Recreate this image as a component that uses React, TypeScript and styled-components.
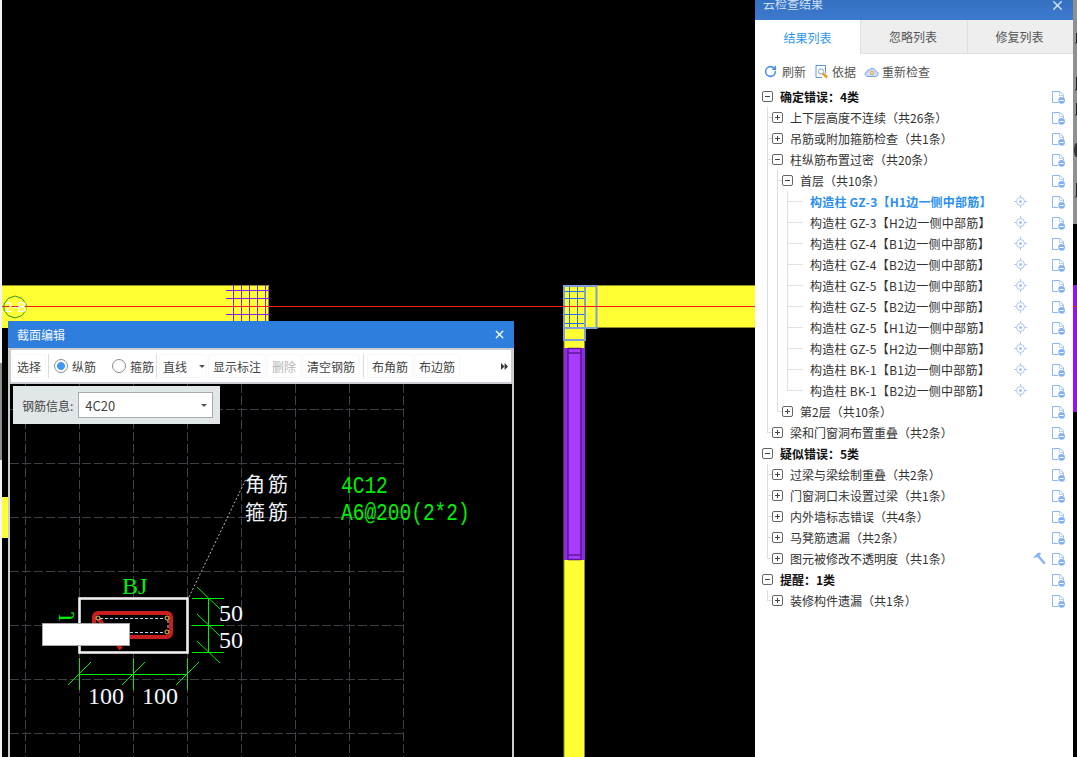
import React from "react";
import styled, { createGlobalStyle } from "styled-components";
import { RotateCw, X } from "lucide-react";

const Global = createGlobalStyle`
  html, body { margin: 0; padding: 0; background: #000; overflow: hidden; }
  body { font-family: "Noto Sans CJK SC", "Liberation Sans", sans-serif; font-size: 12px; }
`;

const Desk = styled.div`
  display: flex;
  width: 1077px;
  height: 757px;
  overflow: hidden;
  background: #000;
`;
const CadArea = styled.main`
  position: relative;
  flex: 0 0 755px;
  height: 757px;
  background: #000;
  overflow: hidden;
`;
const SceneSvg = styled.svg`
  display: block;
  width: 755px;
  height: 757px;
`;
const Dialog = styled.section`
  position: absolute;
  left: 8px;
  top: 321px;
  width: 506px;
  height: 436px;
  display: flex;
  flex-direction: column;
  background: #c9cdd1;
`;
const DialogTitle = styled.header`
  flex: 0 0 27px;
  display: flex;
  align-items: center;
  justify-content: space-between;
  padding: 0 9px;
  background: #2e7fdd;
  color: #f2f7fd;
  font-size: 12px;
`;
const DialogClose = styled.span`
  display: flex;
  color: #fff;
  margin-right: -1px;
`;
const ToolBar = styled.div`
  flex: 0 0 32px;
  margin: 2px 3px 2px 3px;
  display: flex;
  align-items: center;
  background: #fff;
  color: #444;
`;
const ToolButton = styled.button<{ $disabled?: boolean; $m?: number }>`
  height: 24px;
  padding: 0 5px;
  margin: 0 0 0 ${(p) => p.$m ?? 1}px;
  border: 0;
  border-radius: 3px;
  background: #fff;
  box-shadow: inset 0 0 0 1px #f7f7f7;
  font: inherit;
  font-size: 12px;
  color: ${(p) => (p.$disabled ? "#b5b5b5" : "#444")};
  white-space: nowrap;
`;
const DropButton = styled(ToolButton)`
  display: flex;
  align-items: center;
  gap: 12px;
  margin-left: 2px;
  padding: 0 2px 0 4px;
  width: 48px;
`;
const ToolSep = styled.span<{ $m: number }>`
  width: 1px;
  height: 24px;
  margin-left: ${(p) => p.$m}px;
  background: #dcdcdc;
`;
const RadioItem = styled.label<{ $m: number }>`
  display: flex;
  align-items: center;
  gap: 4px;
  margin-left: ${(p) => p.$m}px;
  font-size: 12px;
  color: #444;
`;
const RadioDot = styled.span<{ $on?: boolean }>`
  box-sizing: border-box;
  width: 14px;
  height: 14px;
  border-radius: 50%;
  border: 1px solid #8c8c8c;
  background: ${(p) =>
    p.$on ? "radial-gradient(circle, #3f97f6 0 3.6px, #fff 4.2px)" : "#fff"};
`;
const MoreArrows = styled.span`
  display: flex;
  margin-left: auto;
  margin-right: 3px;
`;
const CadCanvas = styled.div`
  position: relative;
  flex: 1;
  margin: 0 2px;
  background: #000;
  overflow: hidden;
`;
const CadSvg = styled.svg`
  display: block;
  width: 502px;
  height: 373px;
`;
const InfoBar = styled.div`
  position: absolute;
  left: 3px;
  top: 2px;
  width: 207px;
  height: 38px;
  box-sizing: border-box;
  padding-left: 9px;
  display: flex;
  align-items: center;
  gap: 5px;
  background: #e1e7e9;
  color: #444;
  font-size: 12px;
`;
const SelectBox = styled.div`
  box-sizing: border-box;
  width: 135px;
  height: 26px;
  padding: 0 5px 0 6px;
  display: flex;
  align-items: center;
  justify-content: space-between;
  background: #fff;
  border: 1px solid #aaa;
  font-size: 13px;
  color: #444;
`;
const MaskPatch = styled.div`
  position: absolute;
  left: 32px;
  top: 239px;
  width: 88px;
  height: 23px;
  box-sizing: border-box;
  background: #fff;
  border: 1px solid #a8a8a8;
`;

const Panel = styled.aside`
  flex: 0 0 318px;
  height: 757px;
  display: flex;
  flex-direction: column;
  background: #fff;
`;
const PanelHead = styled.header`
  flex: 0 0 20px;
  display: flex;
  justify-content: space-between;
  overflow: hidden;
  padding: 0 8px 0 8px;
  background: linear-gradient(#3571c2, #3c7ace);
  color: #cfe0f5;
  font-size: 12px;
`;
const PanelTitle = styled.span`
  line-height: 16px;
  margin-top: -4px;
`;
const PanelClose = styled.span`
  display: flex;
  margin: -2px 0 0 0;
  color: #cfe0f5;
`;
const Tabs = styled.nav`
  flex: 0 0 34px;
  display: flex;
`;
const Tab = styled.div<{ $active?: boolean; $w: number }>`
  box-sizing: border-box;
  width: ${(p) => p.$w}px;
  display: flex;
  align-items: center;
  justify-content: center;
  font-size: 12px;
  padding-right: ${(p) => (p.$active ? 0 : 2)}px;
  background: ${(p) => (p.$active ? "#fff" : "#eeeeee")};
  color: ${(p) => (p.$active ? "#2e96f0" : "#555")};
  border-left: ${(p) => (p.$active ? "0" : "1px solid #e0e0e0")};
  border-bottom: ${(p) => (p.$active ? "0" : "1px solid #e0e0e0")};
`;
const ActionBar = styled.div`
  flex: 0 0 32px;
  box-sizing: border-box;
  padding: 3px 0 0 9px;
  display: flex;
  align-items: center;
  color: #555;
`;
const Action = styled.span<{ $gap: number; $m: number }>`
  display: flex;
  align-items: center;
  gap: ${(p) => p.$gap}px;
  margin-right: ${(p) => p.$m}px;
  font-size: 12px;
  color: #555;
`;
const Tree = styled.div`
  display: flex;
  flex-direction: column;
`;
const Row = styled.div`
  height: 21px;
  display: flex;
  align-items: center;
  padding: 0 8px 0 7px;
`;
const lineBg: Record<string, string> = {
  none: "none",
  through: "linear-gradient(#dedede,#dedede) 5px 0 / 1px 100% no-repeat",
  branch:
    "linear-gradient(#dedede,#dedede) 5px 0 / 1px 100% no-repeat, linear-gradient(#dedede,#dedede) 5px 50% / 5px 1px no-repeat",
  end: "linear-gradient(#dedede,#dedede) 5px 0 / 1px 50% no-repeat, linear-gradient(#dedede,#dedede) 5px 50% / 5px 1px no-repeat",
};
const Guide = styled.span<{ $line: string }>`
  flex: 0 0 10px;
  height: 21px;
  background: ${(p) => lineBg[p.$line]};
`;
const Toggle = styled.span`
  box-sizing: border-box;
  position: relative;
  flex: 0 0 11px;
  height: 11px;
  margin-right: 7px;
  border: 1px solid #666;
  border-radius: 2px;
  background: #fff;
`;
const ToggleMark = styled.span<{ $plus?: boolean }>`
  position: absolute;
  left: 2px;
  top: 4px;
  width: 5px;
  height: 1px;
  background: #444;
  &::after {
    content: "";
    display: ${(p) => (p.$plus ? "block" : "none")};
    position: absolute;
    left: 2px;
    top: -2px;
    width: 1px;
    height: 5px;
    background: #444;
  }
`;
const LeafLine = styled.span`
  flex: 0 0 11px;
  height: 1px;
  margin-right: 7px;
  background: #e2e2e2;
`;
const Label = styled.span<{ $bold?: boolean; $active?: boolean; $leaf?: boolean }>`
  font-size: 12px;
  white-space: pre;
  letter-spacing: ${(p) => (p.$leaf ? (p.$active ? "0.2px" : "0.27px") : "0")};
  font-weight: ${(p) => (p.$bold || p.$active ? 700 : 400)};
  color: ${(p) => (p.$active ? "#2a8ff0" : p.$bold ? "#111" : "#333")};
`;
const RowIcons = styled.span`
  margin-left: auto;
  display: flex;
  align-items: center;
`;
const RowIconSlot = styled.span<{ $gap: number }>`
  display: flex;
  margin-right: ${(p) => p.$gap}px;
`;
const EdgeStrip = styled.div`
  flex: 0 0 4px;
  height: 757px;
  display: flex;
  flex-direction: column;
`;
const EdgeGrey = styled.svg`
  display: block;
  width: 4px;
  height: 224px;
  background: #8f9090;
`;
const EdgeBlack = styled.div<{ $h: number }>`
  height: ${(p) => p.$h}px;
  background: #000;
`;
const EdgePurple = styled.div`
  height: 127px;
  background: linear-gradient(#ff1a1a, #ff1a1a) 0 21px / 100% 1px no-repeat, #9b10f0;
`;

const DocIcon = () => (
  <svg width="13" height="14" viewBox="0 0 13 14" fill="none">
    <path d="M.5 1.5H8L11.5 5V7M.5 1.5V12.5H6" stroke="#8ab6f4" strokeWidth="1" />
    <path d="M7.5 1.5V5.5H11.5" stroke="#b9d3f8" strokeWidth="1" />
    <circle cx="9.6" cy="10.4" r="3.3" fill="#84b1f2" />
    <rect x="7.6" y="10" width="4" height="1" fill="#fff" />
  </svg>
);
const LocateIcon = () => (
  <svg width="13" height="13" viewBox="0 0 13 13" fill="none" stroke="#a9c6f0">
    <circle cx="6.5" cy="6.5" r="4" />
    <circle cx="6.5" cy="6.5" r="1.6" fill="#a9c6f0" stroke="none" />
    <path d="M6.5 0V2.5M6.5 10.5V13M0 6.5H2.5M10.5 6.5H13" />
  </svg>
);
const HammerIcon = () => (
  <svg width="13" height="13" viewBox="0 0 13 13" fill="none">
    <path d="M0 6L4.5 1L7 .5L8 2L5.5 5Z" fill="#86b4f3" />
    <path d="M5 3.8L11.8 11.8" stroke="#86b4f3" strokeWidth="2.4" />
  </svg>
);
const BasisIcon = () => (
  <svg width="13" height="14" viewBox="0 0 13 14" fill="none">
    <path d="M1 .5H10.5V8M1 .5V12.5H7" stroke="#5f93d8" />
    <circle cx="6" cy="6.5" r="2.6" stroke="#7f9fc8" />
    <path d="M8 8.5L12 12.5" stroke="#f09a24" strokeWidth="2.6" />
  </svg>
);
const CloudIcon = () => (
  <svg width="15" height="12" viewBox="0 0 15 12" fill="none">
    <path
      d="M4 10.5H11.5C15 10.5 15 6 12 5.7C11.5 2.5 7 1 5.5 4C3.5 3.5 2.5 5 3 6C.2 6.5.5 10.5 4 10.5Z"
      fill="#cfe0f6"
      stroke="#6ea2e2"
    />
    <circle cx="8" cy="6.8" r="1.7" stroke="#ef9f45" />
  </svg>
);
const Caret = () => (
  <svg width="6" height="3" viewBox="0 0 6 3">
    <path d="M0 0H6L3 3Z" fill="#555" />
  </svg>
);
const DoubleArrow = () => (
  <svg width="7" height="7" viewBox="0 0 7 7">
    <path d="M0 0L3.4 3.5L0 7ZM3.6 0L7 3.5L3.6 7Z" fill="#333" />
  </svg>
);

type Node = {
  text: string;
  open?: boolean;
  bold?: boolean;
  active?: boolean;
  locate?: boolean;
  hammer?: boolean;
  kids?: Node[];
};

const leaf = (t: string, active = false): Node => ({ text: t, locate: true, active });
const closed = (t: string, hammer = false): Node => ({ text: t, kids: [], hammer });

const DATA: Node[] = [
  {
    text: "确定错误：4类",
    bold: true,
    open: true,
    kids: [
      closed("上下层高度不连续（共26条）"),
      closed("吊筋或附加箍筋检查（共1条）"),
      {
        text: "柱纵筋布置过密（共20条）",
        open: true,
        kids: [
          {
            text: "首层（共10条）",
            open: true,
            kids: [
              leaf("构造柱 GZ-3【H1边一侧中部筋】", true),
              leaf("构造柱 GZ-3【H2边一侧中部筋】"),
              leaf("构造柱 GZ-4【B1边一侧中部筋】"),
              leaf("构造柱 GZ-4【B2边一侧中部筋】"),
              leaf("构造柱 GZ-5【B1边一侧中部筋】"),
              leaf("构造柱 GZ-5【B2边一侧中部筋】"),
              leaf("构造柱 GZ-5【H1边一侧中部筋】"),
              leaf("构造柱 GZ-5【H2边一侧中部筋】"),
              leaf("构造柱 BK-1【B1边一侧中部筋】"),
              leaf("构造柱 BK-1【B2边一侧中部筋】"),
            ],
          },
          closed("第2层（共10条）"),
        ],
      },
      closed("梁和门窗洞布置重叠（共2条）"),
    ],
  },
  {
    text: "疑似错误：5类",
    bold: true,
    open: true,
    kids: [
      closed("过梁与梁绘制重叠（共2条）"),
      closed("门窗洞口未设置过梁（共1条）"),
      closed("内外墙标志错误（共4条）"),
      closed("马凳筋遗漏（共2条）"),
      closed("图元被修改不透明度（共1条）", true),
    ],
  },
  {
    text: "提醒：1类",
    bold: true,
    open: true,
    kids: [closed("装修构件遗漏（共1条）")],
  },
];

function renderNode(n: Node, guides: string[], childPrefix: string[], key: string): React.ReactNode[] {
  const rows: React.ReactNode[] = [
    <Row key={key}>
      {guides.map((g, i) => (
        <Guide key={i} $line={g} />
      ))}
      {n.kids ? (
        <Toggle>
          <ToggleMark $plus={!n.open} />
        </Toggle>
      ) : (
        <LeafLine />
      )}
      <Label $bold={n.bold} $active={n.active} $leaf={!n.kids}>
        {n.text}
      </Label>
      <RowIcons>
        {n.locate && (
          <RowIconSlot $gap={25}>
            <LocateIcon />
          </RowIconSlot>
        )}
        {n.hammer && (
          <RowIconSlot $gap={6}>
            <HammerIcon />
          </RowIconSlot>
        )}
        <DocIcon />
      </RowIcons>
    </Row>,
  ];
  if (n.open && n.kids) {
    n.kids.forEach((k, i) => {
      const last = i === n.kids!.length - 1;
      rows.push(
        ...renderNode(
          k,
          [...childPrefix, last ? "end" : "branch"],
          [...childPrefix, last ? "none" : "through"],
          `${key}-${i}`
        )
      );
    });
  }
  return rows;
}

const Y = "#ffff33";
const OL = "#8c8c28";
const BL = "#7f9fd6";

const Scene = () => (
  <SceneSvg viewBox="0 0 755 757">
    <rect x="0" y="0" width="2" height="757" fill="#f4f4f4" />
    <rect x="0" y="363" width="2" height="97" fill="#8d8d8d" />
    <rect x="2" y="497" width="6" height="41" fill={Y} />
    <rect x="2" y="285" width="267" height="43" fill={Y} />
    <path d="M2 285.5H268.5V328" stroke={OL} fill="none" />
    {[233, 241, 249, 257, 265].map((x) => (
      <path key={x} d={`M${x + 0.5} 285V322`} stroke="#8a1cf0" />
    ))}
    {[290, 298, 314].map((y) => (
      <path key={y} d={`M226 ${y + 0.5}H269`} stroke="#8a1cf0" />
    ))}
    <rect x="597" y="285" width="158" height="43" fill={Y} />
    <path d="M597 285.5H755M597 327.5H755" stroke={OL} />
    <rect x="564" y="285" width="21" height="472" fill={Y} />
    <path d="M564 340V757M584.5 340V757" stroke={OL} />
    <rect x="585" y="286" width="12" height="42" fill={Y} />
    {[569, 577].map((x) => (
      <path key={x} d={`M${x + 0.5} 286V327`} stroke="#1f6cf0" />
    ))}
    {[291, 298, 314, 323].map((y) => (
      <path key={y} d={`M565 ${y + 0.5}H584`} stroke="#1f6cf0" />
    ))}
    <path d="M564 286H596.5V328H585" fill="none" stroke={BL} strokeWidth="2" />
    <path d="M564 285V340H585V286M564 328H585" fill="none" stroke={BL} strokeWidth="2" />
    <rect x="564" y="348" width="21" height="212" fill="#8d28e4" />
    <rect x="568" y="348" width="13" height="212" fill="#a93cff" />
    <path d="M568 348V560M581 348V560" stroke="#5a1a9a" strokeWidth="1.6" />
    <path d="M568 348.5H581M568 353H581M568 555H581M568 559.5H581" stroke="#5a1a9a" strokeWidth="1.4" />
    <path d="M2 306.5H755" stroke="#ff1a1a" strokeWidth="1" />
    <polygon
      points="15,296 22,298.5 26,304 26,310 22,315.5 15,318 8,315.5 4,310 4,304 8,298.5"
      fill="none"
      stroke="#2a9a1a"
    />
    <text x="5" y="312" fontFamily="Liberation Sans" fontSize="14" fill="#fff">
      2-B
    </text>
  </SceneSvg>
);

const V = [25, 79, 133, 187, 241, 295, 349, 403];
const H = [409, 463, 517, 571, 625, 679, 733];
const G = "#00f000";

const Drawing = () => (
  <CadSvg viewBox="10 384 502 373">
    {V.map((x) => (
      <path key={x} d={`M${x + 0.5} 384V757`} stroke="#3c4048" strokeDasharray="9 3" />
    ))}
    {H.map((y) => (
      <path key={y} d={`M10 ${y + 0.5}H404`} stroke="#3c4048" strokeDasharray="9 3" />
    ))}
    <rect x="79.5" y="598.5" width="108" height="54" fill="#000" />
    <path d="M98 618L121 649" stroke="#c81e1e" strokeWidth="4" />
    <rect x="94" y="613" width="77" height="24" rx="4" fill="none" stroke="#c81e1e" strokeWidth="4" />
    <path d="M100 618.5H165M100 632.5H165M168 620V631" stroke="#bcd4f2" strokeDasharray="3 2" />
    {[
      [98, 618],
      [167, 618],
      [98, 632],
      [167, 632],
    ].map(([x, y]) => (
      <circle key={`${x}${y}`} cx={x} cy={y} r="2" fill="#000" stroke="#f2d23a" />
    ))}
    <rect x="79.5" y="598.5" width="108" height="54" fill="none" stroke="#efefef" strokeWidth="2.6" />
    <path d="M189 597L246 479" stroke="#b9b9b9" strokeDasharray="2 2" />
    <g stroke={G} strokeWidth="1">
      <line x1="192" y1="598.5" x2="224" y2="598.5" />
      <line x1="192" y1="625.5" x2="224" y2="625.5" />
      <line x1="192" y1="652.5" x2="224" y2="652.5" />
      <line x1="208.5" y1="598" x2="208.5" y2="653" />
      <line x1="197" y1="587" x2="220" y2="609" />
      <line x1="197" y1="614" x2="220" y2="636" />
      <line x1="197" y1="641" x2="220" y2="663" />
      <line x1="79.5" y1="658" x2="79.5" y2="690" />
      <line x1="133.5" y1="658" x2="133.5" y2="690" />
      <line x1="187.5" y1="658" x2="187.5" y2="690" />
      <line x1="79" y1="674.5" x2="188" y2="674.5" />
      <line x1="68" y1="685" x2="91" y2="662" />
      <line x1="122" y1="685" x2="145" y2="662" />
      <line x1="176" y1="685" x2="199" y2="662" />
    </g>
    <text x="122" y="594" fontFamily="Liberation Serif" fontSize="24" fill={G}>
      BJ
    </text>
    <text
      transform="translate(74 622) rotate(-90) scale(-1 1)"
      fontFamily="Liberation Serif"
      fontSize="24"
      fill={G}
      x="-10"
      y="0"
    >
      J
    </text>
    <g fontFamily="Liberation Serif" fontSize="24" fill="#f4f8ff">
      <text x="219" y="621">50</text>
      <text x="219" y="648">50</text>
      <text x="88" y="704">100</text>
      <text x="142" y="704">100</text>
    </g>
    <g fontFamily="Noto Sans CJK SC" fontSize="20" fill="#f0f4f8" letterSpacing="3">
      <text x="245" y="492">角筋</text>
      <text x="245" y="520">箍筋</text>
    </g>
    <g fontFamily="Liberation Mono" fontSize="19.5" fill={G}>
      <text transform="translate(341 493) scale(1 1.25)">4C12</text>
      <text transform="translate(341 520) scale(1 1.25)">A6@200(2*2)</text>
    </g>
  </CadSvg>
);

export default function App() {
  return (
    <>
      <Global />
      <Desk>
        <CadArea>
          <Scene />
          <Dialog>
            <DialogTitle>
              截面编辑
              <DialogClose>
                <X size={13} strokeWidth={2.4} />
              </DialogClose>
            </DialogTitle>
            <ToolBar>
              <ToolButton>选择</ToolButton>
              <ToolSep $m={2} />
              <RadioItem $m={5}>
                <RadioDot $on />
                纵筋
              </RadioItem>
              <RadioItem $m={16}>
                <RadioDot />
                箍筋
              </RadioItem>
              <ToolSep $m={2} />
              <DropButton>
                直线
                <Caret />
              </DropButton>
              <ToolButton>显示标注</ToolButton>
              <ToolButton $disabled>删除</ToolButton>
              <ToolButton>清空钢筋</ToolButton>
              <ToolSep $m={3} />
              <ToolButton $m={3}>布角筋</ToolButton>
              <ToolButton>布边筋</ToolButton>
              <MoreArrows>
                <DoubleArrow />
              </MoreArrows>
            </ToolBar>
            <CadCanvas>
              <Drawing />
              <InfoBar>
                钢筋信息:
                <SelectBox>
                  4C20
                  <Caret />
                </SelectBox>
              </InfoBar>
              <MaskPatch />
            </CadCanvas>
          </Dialog>
        </CadArea>
        <Panel>
          <PanelHead>
            <PanelTitle>云检查结果</PanelTitle>
            <PanelClose>
              <X size={15} strokeWidth={2.4} />
            </PanelClose>
          </PanelHead>
          <Tabs>
            <Tab $active $w={105}>
              结果列表
            </Tab>
            <Tab $w={107}>忽略列表</Tab>
            <Tab $w={106}>修复列表</Tab>
          </Tabs>
          <ActionBar>
            <Action $gap={5} $m={9}>
              <RotateCw size={13} strokeWidth={2.8} color="#4a90e2" />
              刷新
            </Action>
            <Action $gap={4} $m={8}>
              <BasisIcon />
              依据
            </Action>
            <Action $gap={3} $m={0}>
              <CloudIcon />
              重新检查
            </Action>
          </ActionBar>
          <Tree>
            {DATA.flatMap((n, i) => renderNode(n, [], [], `n${i}`))}
          </Tree>
        </Panel>
        <EdgeStrip>
          <EdgeGrey viewBox="0 0 4 224">
            <path d="M3.5 33V43H2M3.5 77V90H2M3.5 103V115H2M3.5 183V197H2" stroke="#222" fill="none" />
            <ellipse cx="3.5" cy="150" rx="2.5" ry="7" fill="#333" />
          </EdgeGrey>
          <EdgeBlack $h={61} />
          <EdgePurple />
          <EdgeBlack $h={345} />
        </EdgeStrip>
      </Desk>
    </>
  );
}
